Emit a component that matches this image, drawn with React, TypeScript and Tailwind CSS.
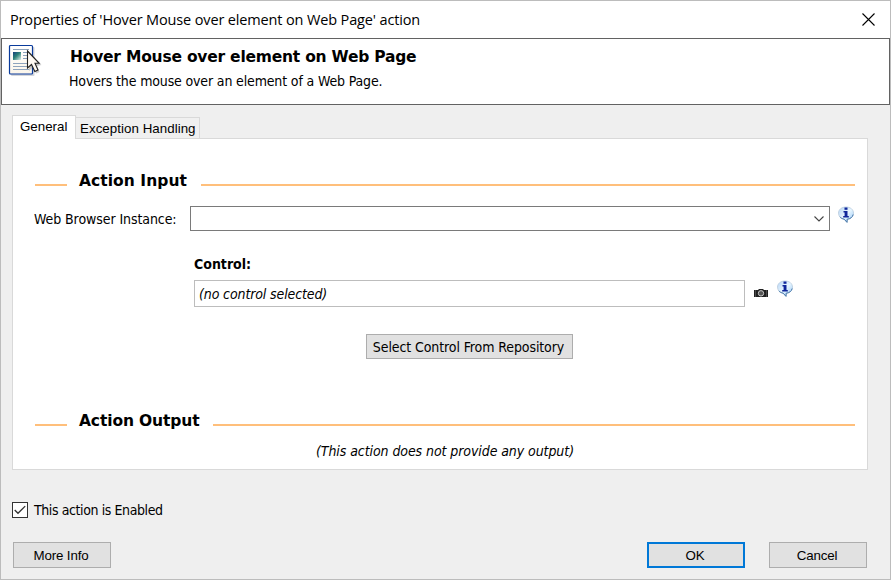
import React from "react";

const tahoma = "font-['DejaVu_Sans_Condensed','DejaVu_Sans',sans-serif] [font-stretch:condensed]";
const heading = "font-['DejaVu_Sans',sans-serif] [font-stretch:normal]";
const arial = "font-['Liberation_Sans',Arial,sans-serif]";

function PageIcon() {
  return (
    <svg width="34" height="34" viewBox="0 0 34 34" className="mt-[5px] ml-[6px] shrink-0">
      <defs>
        <linearGradient id="thumb" x1="0" y1="0" x2="1" y2="1">
          <stop offset="0" stopColor="#173f7c" />
          <stop offset="0.45" stopColor="#2b8078" />
          <stop offset="1" stopColor="#dff0ea" />
        </linearGradient>
        <linearGradient id="paper" x1="0" y1="0" x2="0" y2="1">
          <stop offset="0" stopColor="#ffffff" />
          <stop offset="1" stopColor="#fbf5ea" />
        </linearGradient>
      </defs>
      <rect x="3" y="3" width="23.500" height="29" rx="1" fill="#d4d6da" />
      <rect x="1.500" y="1.500" width="23" height="28.500" rx="1" fill="url(#paper)" stroke="#0a3b9c" strokeWidth="1.200" />
      <path d="M5 5.500H21M5 19.500H19M5 22.500H20M5 25.500H21M15 8.500H21M15 11.500H19M15 14.500H19" stroke="#8ea3bd" />
      <rect x="5" y="8" width="8" height="8" fill="url(#thumb)" />
      <path d="M21 10L21 27L25 23L28 29.500L31.500 28L29 22L33.500 21Z" fill="#999" opacity="0.5" />
      <path d="M19.500 7V24L23.500 20.500L26.800 27.500L30 26L27 19.300H31.200Z" fill="#fffaf3" stroke="#222" strokeWidth="1.100" />
    </svg>
  );
}

function InfoIcon({ id }: { id: string }) {
  return (
    <svg width="18" height="18" viewBox="0 0 18 18" className="block">
      <defs>
        <linearGradient id={id} x1="0" y1="0" x2="1" y2="1">
          <stop offset="0" stopColor="#b7d4f5" />
          <stop offset="0.5" stopColor="#e8f6ff" />
          <stop offset="1" stopColor="#8fc3f5" />
        </linearGradient>
      </defs>
      <path d="M9 1C4.500 1 1.500 3.600 1.500 7.100C1.500 10.300 4 12.600 7.200 13.200L10 16.500L10.300 13.300C14 12.800 16.500 10.400 16.500 7.100C16.500 3.600 13.500 1 9 1Z" fill={`url(#${id})`} stroke="#b2c5d8" strokeWidth="0.700" />
      <path d="M16.200 8.500C15.500 11.500 13 13 10.200 13.200L10 16.300L7.200 13.200C5.500 12.900 3.900 12.200 2.800 10.900" fill="none" stroke="#4778aa" strokeWidth="1" />
      <rect x="7.500" y="1.500" width="3" height="2.300" fill="#10269a" />
      <path d="M6.500 5H10.500V10H11.800V11.500H6.200V10H7.600V6.500H6.500Z" fill="#10269a" />
    </svg>
  );
}

function CameraIcon() {
  return (
    <svg width="14" height="9" viewBox="0 0 14 9" className="block">
      <path d="M0 1H4L5 0H9L10 1H14V8H0Z" fill="#202020" />
      <path d="M1.500 1V8M12.500 1V8" stroke="#4a4a4a" />
      <circle cx="7" cy="4.300" r="2.700" fill="#555" stroke="#c5c5c5" strokeWidth="1" />
    </svg>
  );
}

function Section({ title, width, tracking }: { title: string; width: string; tracking: string }) {
  return (
    <div className="flex h-5 items-center">
      <div className="mt-[9px] ml-[22px] h-[2px] w-8 bg-[#ffbf7b]" />
      <h2 className={`${heading} ${width} ${tracking} ml-3 pt-px text-[15.5px] leading-5 font-bold whitespace-nowrap`}>{title}</h2>
      <div className="mt-[9px] mr-3 h-[2px] flex-1 bg-[#ffbf7b]" />
    </div>
  );
}

export default function App() {
  return (
    <div className="flex h-[580px] w-[891px] flex-col border border-[#bcbcbc] bg-[#efefef] text-black">
      <header className="flex h-[37px] shrink-0 items-center justify-between bg-white pr-[15px] pl-[9px]">
        <span className="font-['Open_Sans','Noto_Sans',sans-serif] text-[14.5px] leading-5 tracking-[-0.14px] whitespace-nowrap">
          Properties of 'Hover Mouse over element on Web Page' action
        </span>
        <svg width="13" height="13" viewBox="0 0 13 13">
          <path d="M0.500 0.500L12.500 12.500M12.500 0.500L0.500 12.500" stroke="#000" strokeWidth="1.100" />
        </svg>
      </header>

      <section className="flex h-[67px] shrink-0 border border-[#626262] bg-white">
        <PageIcon />
        <div className="ml-[27px] pt-[8px]">
          <h1 className={`${heading} ml-px text-[15.5px] leading-5 font-bold tracking-[-0.22px] whitespace-nowrap`}>
            Hover Mouse over element on Web Page
          </h1>
          <p className={`${tahoma} mt-[4px] text-[14px] leading-5 tracking-[-0.15px] whitespace-nowrap`}>
            Hovers the mouse over an element of a Web Page.
          </p>
        </div>
      </section>

      <nav className={`${arial} z-10 mt-[10px] -mb-px ml-[11px] flex h-6 shrink-0 items-end text-[13.33px]`}>
        <div className="h-6 w-16 border border-b-0 border-[#d9d9d9] bg-white pt-[2px] pl-[7px] leading-[18px]">General</div>
        <div className="h-[22px] w-[124px] border border-l-0 border-[#d9d9d9] bg-[#f0f0f0] pt-px pl-1 leading-[19px] tracking-[0.04px] whitespace-nowrap">
          Exception Handling
        </div>
      </nav>

      <main className={`${tahoma} ml-[11px] flex h-[332px] w-[856px] shrink-0 flex-col border border-[#d9d9d9] bg-white text-[14px]`}>
        <div className="mt-[31px]">
          <Section title="Action Input" width="w-[122px]" tracking="tracking-[0.05px]" />
        </div>
        <div className="mt-4 flex h-[25px]">
          <span className="ml-[21px] w-[156px] leading-[27px] tracking-[-0.08px] whitespace-nowrap">Web Browser Instance:</span>
          <div className="flex w-[640px] items-center justify-end border border-[#7a7a7a] pr-[5px]">
            <svg width="10" height="6" viewBox="0 0 10 6">
              <path d="M0.500 0.500L5 5L9.500 0.500" fill="none" stroke="#444" strokeWidth="1.100" />
            </svg>
          </div>
          <div className="ml-[7px]"><InfoIcon id="info-browser" /></div>
        </div>
        <h3 className="mt-[23px] ml-[181px] h-5 leading-5 font-bold tracking-[0px]">Control:</h3>
        <div className="mt-[6px] ml-[181px] flex h-[27px]">
          <div className="w-[551px] border border-[#bdbdbd] pl-1 leading-[27px] tracking-[-0.12px] italic">(no control selected)</div>
          <div className="mt-[9px] ml-[9px]"><CameraIcon /></div>
          <div className="ml-[8px]"><InfoIcon id="info-control" /></div>
        </div>
        <button className="mt-[27px] ml-[353px] h-[25px] w-[207px] border border-[#adadad] bg-[#e1e1e1] pt-px pr-[2px] text-center leading-[23px] tracking-[-0.1px] whitespace-nowrap">
          Select Control From Repository
        </button>
        <div className="mt-[51px]">
          <Section title="Action Output" width="w-[134px]" tracking="tracking-[-0.13px]" />
        </div>
        <p className="mt-[11px] ml-[303px] leading-5 tracking-[-0.08px] whitespace-nowrap italic">(This action does not provide any output)</p>
      </main>

      <label className={`${tahoma} mt-[30px] ml-[11px] flex h-5 shrink-0 items-center gap-[6px] text-[14px] tracking-[-0.4px]`}>
        <span className="flex h-4 w-4 items-center justify-center border border-[#333] bg-white">
          <svg width="12" height="10" viewBox="0 0 12 10">
            <path d="M0.700 5L4 8.300L11.200 1.100" fill="none" stroke="#333" strokeWidth="1.300" />
          </svg>
        </span>
        This action is Enabled
      </label>

      <footer className={`${arial} mt-[22px] ml-3 flex h-[26px] shrink-0 text-[13.33px] tracking-[-0.15px]`}>
        <button className="w-[98px] border border-[#adadad] bg-[#e1e1e1] pt-[2px] pr-[2px]">More Info</button>
        <button className="ml-[536px] w-[98px] border-2 border-[#0078d7] bg-[#e1e1e1] pt-[2px] pr-[2px]">OK</button>
        <button className="ml-6 w-[98px] border border-[#adadad] bg-[#e1e1e1] pt-[2px] pr-[2px]">Cancel</button>
      </footer>
    </div>
  );
}
